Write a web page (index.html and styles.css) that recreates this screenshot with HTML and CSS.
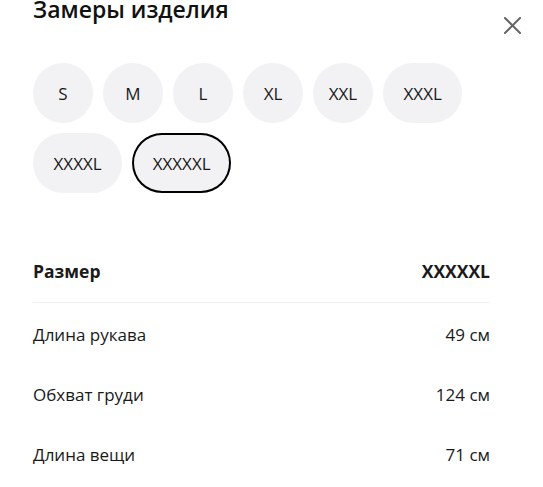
FILE: index.html
```html
<!DOCTYPE html>
<html lang="ru">
<head>
<meta charset="utf-8">
<link rel="stylesheet" href="styles.css">
</head>
<body>
<div class="modal">
  <button class="close" aria-label="Закрыть">
    <svg width="17" height="17" viewBox="0 0 17 17"><path d="M1 1L16 16M16 1L1 16" stroke="#666" stroke-width="2" fill="none" stroke-linecap="square"/></svg>
  </button>
  <div class="content">
    <h2 class="title">Замеры изделия</h2>
    <div class="sizes">
      <span class="chip">S</span>
      <span class="chip">M</span>
      <span class="chip">L</span>
      <span class="chip">XL</span>
      <span class="chip">XXL</span>
      <span class="chip wide">XXXL</span>
      <span class="chip wide">XXXXL</span>
      <span class="chip wide selected">XXXXXL</span>
    </div>
    <div class="table">
      <div class="row head"><span>Размер</span><span>XXXXXL</span></div>
      <div class="row"><span>Длина рукава</span><span>49 см</span></div>
      <div class="row"><span>Обхват груди</span><span>124 см</span></div>
      <div class="row"><span>Длина вещи</span><span>71 см</span></div>
    </div>
  </div>
</div>
</body>
</html>
```
FILE: styles.css
```css
* { box-sizing: border-box; }
html, body { margin: 0; padding: 0; background: #fff; }
body {
  font-family: "Open Sans", "Noto Sans", sans-serif;
  color: #1a1a1a;
  overflow: hidden;
}
.modal {
  position: relative;
  width: 543px;
  height: 487px;
}
.close {
  position: absolute;
  top: 24px;
  left: 504px;
  width: 17px;
  height: 17px;
  padding: 0;
  border: 0;
  background: none;
  display: block;
}
.close svg { display: block; }
.content {
  width: 457px;
  margin-left: 33px;
}
.title {
  margin: -7px 0 0;
  font-size: 23px;
  line-height: 33px;
  font-weight: 600;
  color: #111;
}
.sizes {
  display: flex;
  flex-wrap: wrap;
  gap: 10px;
  margin-top: 37px;
  width: 440px;
}
.chip {
  height: 60px;
  min-width: 60px;
  padding: 0;
  border-radius: 30px;
  background: #f2f2f5;
  display: flex;
  align-items: center;
  justify-content: center;
  font-size: 17px;
  color: #1a1a1a;
}
.chip.wide { padding: 0 20.5px; }
.chip.selected {
  box-shadow: inset 0 0 0 2px #000;
}
.table { margin-top: 47px; }
.row {
  display: flex;
  justify-content: space-between;
  align-items: center;
  height: 60px;
  font-size: 17px;
}
.row.head {
  height: 63px;
  font-weight: 700;
  font-size: 17.5px;
  border-bottom: 1px solid #efefef;
  margin-bottom: 1px;
}
```
